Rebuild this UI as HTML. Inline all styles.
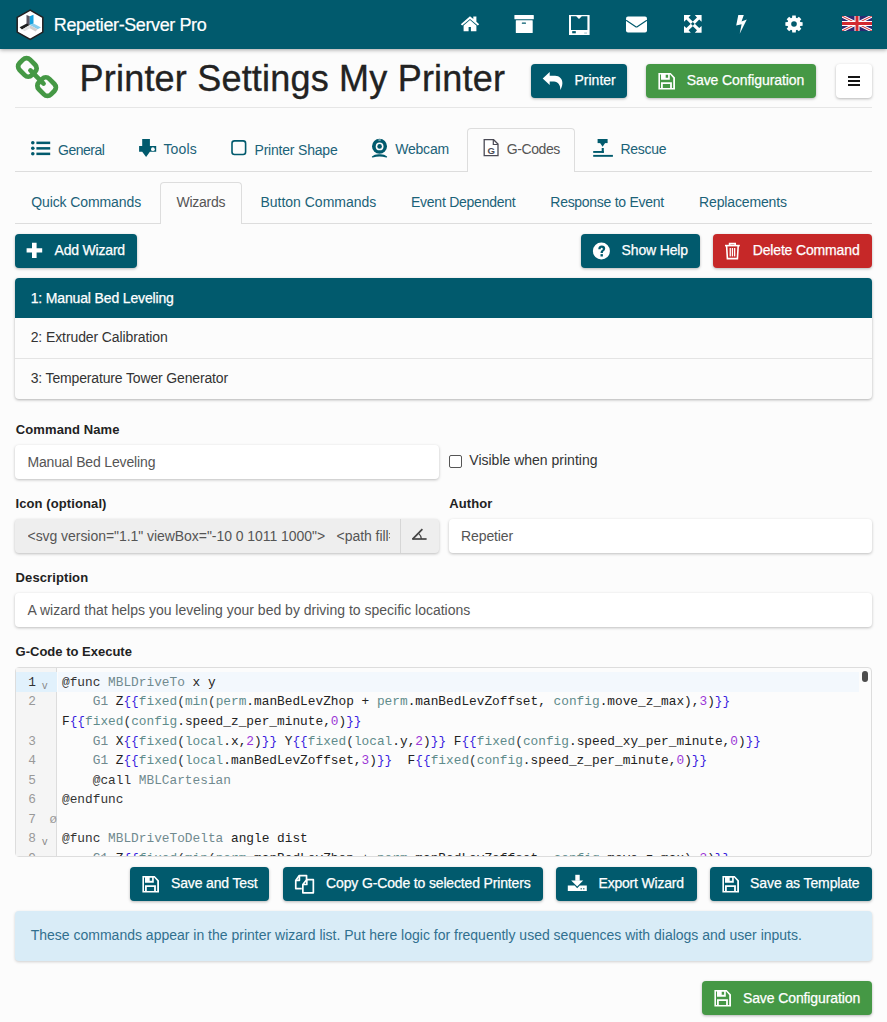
<!DOCTYPE html>
<html><head><meta charset="utf-8">
<style>
*{box-sizing:border-box;margin:0;padding:0}
html,body{width:887px;height:1022px;overflow:hidden;background:#fcfcfc;font-family:"Liberation Sans",sans-serif;font-size:14px;color:#333;position:relative}
.a{position:absolute;white-space:nowrap;line-height:1}
.cm{font-family:"Liberation Mono",monospace;font-size:12.8px;line-height:1}
</style></head><body>
<div style="position:absolute;left:0px;top:0px;width:887px;height:49px;background:#015a6d;box-shadow:0 1px 4px rgba(0,0,0,.35)"></div>
<svg style="position:absolute;left:16px;top:9px;overflow:visible" width="28" height="32" viewBox="0 0 28 32"><polygon points="14.2,1.1 26.8,8.4 26.8,23.1 14.2,30.3 1.2,23.1 1.2,8.4" fill="#fff" stroke="#231f20" stroke-width="1.5"/><polygon points="10.5,6 13.8,7.3 13.8,16.1 10.5,14.8" fill="#5b5662"/><polygon points="13.8,7.3 17.5,5.8 17.5,14.6 13.8,16.1" fill="#16a2de"/><polygon points="3.6,18.3 10.8,14.5 13.8,16.1 6,20.4" fill="#1e1e1e"/><polygon points="13.8,16.1 17.5,14.6 25,18.4 21.5,20.2" fill="#85cdee"/><polygon points="6,20.4 13.8,16.1 13.9,19.2 8.6,22.2" fill="#e2e2e2"/><polygon points="13.9,16.2 21.5,20.2 19.6,22.6 13.9,19.2" fill="#cfcfcf"/></svg>
<div class="a" style="left:53.80px;top:15.56px;font-size:18px;color:#fff;letter-spacing:-0.4px;-webkit-text-stroke:0.2px #fff;">Repetier-Server Pro</div>
<svg style="position:absolute;left:460px;top:15px;overflow:visible" width="20" height="17" viewBox="0 0 20 17"><path d="M10,1.2 L0.8,9.2 L2.2,10.6 L10,4 L17.8,10.6 L19.2,9.2 L16.4,6.8 L16.4,1.4 L13.3,1.4 L13.3,4.1 Z" fill="#fff"/><path d="M3.6,10.4 L10,5 L16.4,10.4 L16.4,16.2 L10.9,16.2 L10.9,12 L8.6,12 L8.6,16.2 L3.6,16.2 Z" fill="#fff"/></svg>
<svg style="position:absolute;left:514px;top:15px;overflow:visible" width="20" height="18" viewBox="0 0 20 18"><rect x="0.4" y="0" width="19.4" height="4.3" rx="0.6" fill="#fff"/><rect x="1.8" y="5.2" width="16.9" height="12.8" rx="0.5" fill="#fff"/><rect x="7.8" y="7.6" width="4.2" height="1.2" rx="0.5" fill="#015a6d"/></svg>
<svg style="position:absolute;left:569px;top:15px;overflow:visible" width="21" height="20" viewBox="0 0 21 20"><path fill="#fff" fill-rule="evenodd" d="M0,0 H20.6 V20 H0 Z M2,1.2 V15 H18.4 V1.2 H12.8 L10,3.9 L7.2,1.2 Z"/><rect x="3.2" y="16.1" width="3.6" height="2.2" fill="#015a6d"/><rect x="15.2" y="17.6" width="2.8" height="0.9" fill="#8fb6c2"/></svg>
<svg style="position:absolute;left:626px;top:16px;overflow:visible" width="21" height="17" viewBox="0 0 21 17"><rect x="0" y="0.4" width="21" height="16" rx="2" fill="#fff"/><path d="M0.1,4.3 L9.4,10.6 Q10.5,11.4 11.6,10.6 L20.9,4.3" fill="none" stroke="#015a6d" stroke-width="1.2"/></svg>
<svg style="position:absolute;left:684px;top:15px;overflow:visible" width="18" height="18" viewBox="0 0 18 18"><g fill="#fff"><polygon points="0,0 6.8,0 4.6,2.4 9,6.8 6.8,9 2.4,4.6 0,6.8"/><polygon points="17.6,0 10.8,0 13,2.4 8.6,6.8 10.8,9 15.2,4.6 17.6,6.8"/><polygon points="0,17.7 6.8,17.7 4.6,15.3 9,10.9 6.8,8.7 2.4,13.1 0,10.9"/><polygon points="17.6,17.7 10.8,17.7 13,15.3 8.6,10.9 10.8,8.7 15.2,13.1 17.6,10.9"/></g></svg>
<svg style="position:absolute;left:735px;top:15px;overflow:visible" width="12" height="19" viewBox="0 0 12 19"><polygon points="3.3,0.1 8.8,0.1 6.5,6.6 11.8,4.6 4.7,18.7 6.6,9.3 1.2,10.5" fill="#fff"/></svg>
<svg style="position:absolute;left:785px;top:15px;overflow:visible" width="18" height="18" viewBox="0 0 18 18"><polygon points="7.05,2.69 7.25,0.38 10.75,0.38 10.95,2.69 12.08,3.16 13.86,1.67 16.33,4.14 14.84,5.92 15.31,7.05 17.62,7.25 17.62,10.75 15.31,10.95 14.84,12.08 16.33,13.86 13.86,16.33 12.08,14.84 10.95,15.31 10.75,17.62 7.25,17.62 7.05,15.31 5.92,14.84 4.14,16.33 1.67,13.86 3.16,12.08 2.69,10.95 0.38,10.75 0.38,7.25 2.69,7.05 3.16,5.92 1.67,4.14 4.14,1.67 5.92,3.16" fill="#fff"/><circle cx="9" cy="9" r="5.6" fill="#fff"/><circle cx="9" cy="9" r="2.8" fill="#015a6d"/></svg>
<svg style="position:absolute;left:842px;top:16px;overflow:visible" width="30" height="15" viewBox="0 0 30 15"><defs><clipPath id="fc"><rect width="30" height="15"/></clipPath></defs><g clip-path="url(#fc)"><rect width="30" height="15" fill="#2d2a72"/><path d="M0,0 L30,15 M30,0 L0,15" stroke="#fff" stroke-width="3"/><path d="M0,0 L30,15 M30,0 L0,15" stroke="#d3282f" stroke-width="1"/><path d="M15,0 V15 M0,7.5 H30" stroke="#fff" stroke-width="5"/><path d="M15,0 V15 M0,7.5 H30" stroke="#d3282f" stroke-width="3"/></g></svg>
<svg style="position:absolute;left:15px;top:55px;overflow:visible" width="44" height="44" viewBox="0 0 44 44"><g transform="rotate(45 22 22)" fill="none" stroke="#459845"><rect x="-0.2" y="14.6" width="17.2" height="14.8" rx="5" stroke-width="4.8"/><rect x="27" y="14.6" width="17.2" height="14.8" rx="5" stroke-width="4.8"/><line x1="12.7" y1="22" x2="31.3" y2="22" stroke-width="4.6" stroke-linecap="round"/></g></svg>
<div class="a" style="left:79.60px;top:60.53px;font-size:36px;color:#222;letter-spacing:0.2px;-webkit-text-stroke:0.35px #222;">Printer Settings My Printer</div>
<div style="position:absolute;left:15px;top:107px;width:857px;height:1px;background:#e6e6e6"></div>
<div style="position:absolute;left:531px;top:64px;width:96px;height:34px;background:#015a6d;border-radius:4px;box-shadow:0 1px 3px rgba(0,0,0,.28)"></div>
<svg style="position:absolute;left:538px;top:66px" width="30" height="28" viewBox="0 0 30 28"><path fill="#fff" d="M4.7,12.5 L11.7,5.9 L11.7,9.8 L17,9.8 C21.5,9.8 24.6,13 24.4,17.2 C24.3,20 23.2,22.4 22.3,23.9 C22.6,19 20,15.4 16,15.4 L11.7,15.4 L11.7,19 Z"/></svg>
<div class="a" style="left:574.50px;top:73.15px;font-size:14px;color:#fff;-webkit-text-stroke:0.25px #fff;">Printer</div>
<div style="position:absolute;left:646px;top:64px;width:170px;height:34px;background:#459845;border-radius:4px;box-shadow:0 1px 3px rgba(0,0,0,.28)"></div>
<svg style="position:absolute;left:658px;top:73px" width="18" height="17" viewBox="0 0 18 17"><path fill="#fff" fill-rule="evenodd" d="M0.4,0.1 H12.7 L17,4.5 V16.5 H0.4 Z M2,1.5 V15 H15.2 V5.1 L12.1,1.5 Z M3,1.5 H11.8 V6.8 H3 Z M7.7,1.7 H10.1 V4.8 H7.7 Z M3,9.2 H13.9 V15 H3 Z M4.8,11 H12.1 V15 H4.8 Z"/></svg>
<div class="a" style="left:686.80px;top:73.15px;font-size:14px;color:#fff;letter-spacing:-0.1px;-webkit-text-stroke:0.25px #fff;">Save Configuration</div>
<div style="position:absolute;left:836px;top:64px;width:36px;height:34px;background:#fff;border-radius:4px;box-shadow:0 1px 3px rgba(0,0,0,.28)"></div>
<div style="position:absolute;left:848px;top:76px;width:12px;height:2px;background:#151515"></div>
<div style="position:absolute;left:848px;top:80px;width:12px;height:2px;background:#151515"></div>
<div style="position:absolute;left:848px;top:84px;width:12px;height:2px;background:#151515"></div>
<div style="position:absolute;left:467px;top:128px;width:108px;height:44px;border:1px solid #ddd;border-bottom:none;border-radius:4px 4px 0 0;background:#fcfcfc"></div>
<div style="position:absolute;left:15px;top:171px;width:452px;height:1px;background:#ddd"></div>
<div style="position:absolute;left:575px;top:171px;width:297px;height:1px;background:#ddd"></div>
<svg style="position:absolute;left:31px;top:141px;overflow:visible" width="20" height="15" viewBox="0 0 20 15"><g fill="#015a6d"><circle cx="1.8" cy="1.8" r="1.8"/><circle cx="1.8" cy="7.3" r="1.8"/><circle cx="1.8" cy="12.8" r="1.8"/><rect x="5.4" y="0.6" width="13.8" height="2.5"/><rect x="5.4" y="6.1" width="13.8" height="2.5"/><rect x="5.4" y="11.6" width="13.8" height="2.5"/></g></svg>
<div class="a" style="left:58.10px;top:142.75px;font-size:14px;color:#1b6278;letter-spacing:-0.5px;">General</div>
<svg style="position:absolute;left:139px;top:139px;overflow:visible" width="18" height="19" viewBox="0 0 18 19"><path fill="#015a6d" d="M3.2,0 H10.9 V7 H17.2 V12.7 H10.9 L7.1,18.1 L3.2,12.7 H0.1 V7 H3.2 Z"/><circle cx="13.9" cy="10.2" r="1.9" fill="#fcfcfc"/></svg>
<div class="a" style="left:163.40px;top:142.05px;font-size:14px;color:#1b6278;letter-spacing:0.2px;">Tools</div>
<svg style="position:absolute;left:231px;top:140px;overflow:visible" width="16" height="16" viewBox="0 0 16 16"><rect x="1" y="0.9" width="13.6" height="13.6" rx="2.5" fill="none" stroke="#015a6d" stroke-width="1.6"/></svg>
<div class="a" style="left:254.50px;top:143.15px;font-size:14px;color:#1b6278;letter-spacing:-0.2px;">Printer Shape</div>
<svg style="position:absolute;left:371px;top:138px;overflow:visible" width="17" height="20" viewBox="0 0 17 20"><circle cx="8.5" cy="8.3" r="7.5" fill="#015a6d"/><circle cx="8.6" cy="8.4" r="3.9" fill="#fcfcfc"/><circle cx="8.6" cy="8.4" r="2.3" fill="#015a6d"/><rect x="7.4" y="1.5" width="2.4" height="1" fill="#cfdde1"/><path d="M0.9,18.4 Q4,15.8 8.5,16.2 Q13,15.8 16.1,18.4 Q16.4,19.6 15.2,19.4 Q8.5,17.6 1.8,19.4 Q0.6,19.6 0.9,18.4 Z" fill="#015a6d"/></svg>
<div class="a" style="left:395.20px;top:141.85px;font-size:14px;color:#1b6278;letter-spacing:-0.2px;">Webcam</div>
<svg style="position:absolute;left:483px;top:139px;overflow:visible" width="17" height="18" viewBox="0 0 17 18"><path d="M1.2,0.7 H10.6 L15,5.1 V16.6 H1.2 Z" fill="#fff" stroke="#4a4a55" stroke-width="1.3"/><path d="M10.3,0.8 V5.5 H15" fill="none" stroke="#4a4a55" stroke-width="1.2"/><text x="4.6" y="14.6" font-family="Liberation Sans" font-weight="bold" font-size="9.6" fill="#4a4a55">G</text></svg>
<div class="a" style="left:506.70px;top:141.65px;font-size:14px;color:#555;letter-spacing:-0.4px;">G-Codes</div>
<svg style="position:absolute;left:593px;top:139px;overflow:visible" width="20" height="18" viewBox="0 0 20 18"><g fill="#015a6d"><rect x="4.6" y="0" width="10" height="4.1"/><polygon points="7.1,4 12.1,4 9.6,7.8"/><rect x="8.7" y="9" width="2.1" height="4.9"/><rect x="0.2" y="12" width="10.6" height="1.9"/><rect x="0.2" y="15.9" width="19.7" height="1.9"/></g></svg>
<div class="a" style="left:620.50px;top:141.95px;font-size:14px;color:#1b6278;letter-spacing:-0.3px;">Rescue</div>
<div style="position:absolute;left:160px;top:182px;width:82px;height:42px;border:1px solid #ddd;border-bottom:none;border-radius:4px 4px 0 0;background:#fcfcfc"></div>
<div style="position:absolute;left:15px;top:223px;width:145px;height:1px;background:#ddd"></div>
<div style="position:absolute;left:242px;top:223px;width:630px;height:1px;background:#ddd"></div>
<div class="a" style="left:31.20px;top:195.15px;font-size:14px;color:#1b6278;letter-spacing:-0.1px;">Quick Commands</div>
<div class="a" style="left:176.50px;top:195.15px;font-size:14px;color:#555;letter-spacing:-0.25px;">Wizards</div>
<div class="a" style="left:260.40px;top:195.15px;font-size:14px;color:#1b6278;">Button Commands</div>
<div class="a" style="left:411.00px;top:195.15px;font-size:14px;color:#1b6278;letter-spacing:-0.25px;">Event Dependent</div>
<div class="a" style="left:550.30px;top:195.15px;font-size:14px;color:#1b6278;letter-spacing:-0.28px;">Response to Event</div>
<div class="a" style="left:699.10px;top:195.15px;font-size:14px;color:#1b6278;letter-spacing:-0.15px;">Replacements</div>
<div style="position:absolute;left:15px;top:234px;width:122px;height:34px;background:#015a6d;border-radius:4px;box-shadow:0 1px 3px rgba(0,0,0,.28)"></div>
<svg style="position:absolute;left:26px;top:242px" width="17" height="17" viewBox="0 0 17 17"><path fill="#fff" d="M6,0.8 H10.6 V6.2 H16.2 V10.6 H10.6 V16 H6 V10.6 H0.6 V6.2 H6 Z"/></svg>
<div class="a" style="left:54.60px;top:243.15px;font-size:14px;color:#fff;letter-spacing:-0.2px;-webkit-text-stroke:0.25px #fff;">Add Wizard</div>
<div style="position:absolute;left:581px;top:234px;width:119px;height:34px;background:#015a6d;border-radius:4px;box-shadow:0 1px 3px rgba(0,0,0,.28)"></div>
<svg style="position:absolute;left:592px;top:242px" width="19" height="19" viewBox="0 0 19 19"><circle cx="9.4" cy="9" r="8.5" fill="#fff"/><path d="M6.3,7.2 Q6.3,3.5 9.8,3.5 Q13.2,3.5 13.2,6.6 Q13.2,8.6 11.3,9.6 Q10.9,9.9 10.9,11 H8.5 Q8.5,9 9.9,8.1 Q10.8,7.6 10.8,6.9 Q10.8,5.8 9.7,5.8 Q8.6,5.8 8.6,7.2 Z" fill="#015a6d"/><rect x="8.5" y="12.1" width="2.4" height="2.4" fill="#015a6d"/></svg>
<div class="a" style="left:621.60px;top:243.15px;font-size:14px;color:#fff;letter-spacing:-0.15px;-webkit-text-stroke:0.25px #fff;">Show Help</div>
<div style="position:absolute;left:713px;top:234px;width:159px;height:34px;background:#c62828;border-radius:4px;box-shadow:0 1px 3px rgba(0,0,0,.28)"></div>
<svg style="position:absolute;left:724px;top:242px" width="17" height="18" viewBox="0 0 17 18"><g fill="none" stroke="#fff" stroke-width="1.6"><path d="M1,3.6 H15.8"/><path d="M5.6,3.4 V1.6 H11.2 V3.4"/><path d="M2.6,3.8 L3.4,16.6 H13.4 L14.2,3.8"/></g><g fill="#fff"><rect x="5.6" y="6" width="1.3" height="8.4"/><rect x="7.8" y="6" width="1.3" height="8.4"/><rect x="10" y="6" width="1.3" height="8.4"/></g></svg>
<div class="a" style="left:752.70px;top:243.15px;font-size:14px;color:#fff;letter-spacing:-0.15px;-webkit-text-stroke:0.25px #fff;">Delete Command</div>
<div style="position:absolute;left:15px;top:278px;width:857px;height:121px;background:#fcfcfc;border-radius:4px;box-shadow:0 1px 3px rgba(0,0,0,.3)"></div>
<div style="position:absolute;left:15px;top:278px;width:857px;height:40px;background:#015a6d;border-radius:4px 4px 0 0"></div>
<div style="position:absolute;left:15px;top:358px;width:857px;height:1px;background:#e4e4e4"></div>
<div class="a" style="left:30.70px;top:290.65px;font-size:14px;color:#fff;letter-spacing:-0.15px;-webkit-text-stroke:0.25px #fff;">1: Manual Bed Leveling</div>
<div class="a" style="left:30.70px;top:330.15px;font-size:14px;color:#333;letter-spacing:-0.1px;">2: Extruder Calibration</div>
<div class="a" style="left:30.70px;top:371.15px;font-size:14px;color:#333;letter-spacing:-0.15px;">3: Temperature Tower Generator</div>
<div class="a" style="left:15.80px;top:422.80px;font-size:13px;color:#222;font-weight:700;letter-spacing:0.1px;">Command Name</div>
<div style="position:absolute;left:15px;top:445px;width:424px;height:34px;background:#fff;border-radius:4px;box-shadow:0 1px 3px rgba(0,0,0,.25)"></div>
<div class="a" style="left:27.40px;top:455.15px;font-size:14px;color:#555;letter-spacing:-0.15px;">Manual Bed Leveling</div>
<div style="position:absolute;left:449px;top:455px;width:13px;height:13px;border:1.3px solid #555;border-radius:2px;background:#fff"></div>
<div class="a" style="left:469.30px;top:453.15px;font-size:14px;color:#333;">Visible when printing</div>
<div class="a" style="left:15.50px;top:497.30px;font-size:13px;color:#222;font-weight:700;letter-spacing:0.1px;">Icon (optional)</div>
<div style="position:absolute;left:15px;top:519px;width:424px;height:34px;background:#eee;border-radius:4px;box-shadow:0 1px 3px rgba(0,0,0,.25)"></div>
<div class="a" style="left:27.5px;top:529.45px;width:362px;height:18px;overflow:hidden;font-size:14px;color:#555;letter-spacing:-0.05px">&lt;svg version="1.1" viewBox="-10 0 1011 1000"&gt;&nbsp;&nbsp; &lt;path fill="currentColor" d="M0"/&gt;</div>
<div style="position:absolute;left:400px;top:519px;width:1px;height:34px;background:#d6d6d6"></div>
<svg style="position:absolute;left:411px;top:527px;overflow:visible" width="17" height="14" viewBox="0 0 17 14"><path d="M1.6,12.2 L11.4,2.2" stroke="#444" stroke-width="1.7" fill="none"/><path d="M1.2,12 H15.6" stroke="#444" stroke-width="1.7" fill="none"/><path d="M7.8,6.6 Q10.2,8.6 10.4,12" stroke="#444" stroke-width="1.2" fill="none"/></svg>
<div class="a" style="left:449.20px;top:496.60px;font-size:13px;color:#222;font-weight:700;letter-spacing:0.1px;">Author</div>
<div style="position:absolute;left:449px;top:519px;width:423px;height:34px;background:#fff;border-radius:4px;box-shadow:0 1px 3px rgba(0,0,0,.25)"></div>
<div class="a" style="left:461.00px;top:528.85px;font-size:14px;color:#555;letter-spacing:-0.1px;">Repetier</div>
<div class="a" style="left:15.60px;top:571.10px;font-size:13px;color:#222;font-weight:700;letter-spacing:0.1px;">Description</div>
<div style="position:absolute;left:15px;top:593px;width:857px;height:34px;background:#fff;border-radius:4px;box-shadow:0 1px 3px rgba(0,0,0,.25)"></div>
<div class="a" style="left:27.50px;top:602.75px;font-size:14px;color:#555;">A wizard that helps you leveling your bed by driving to specific locations</div>
<div class="a" style="left:15.60px;top:644.70px;font-size:13px;color:#222;font-weight:700;">G-Code to Execute</div>
<div style="position:absolute;left:15px;top:667px;width:857px;height:190px;background:#fcfcfc;border:1px solid #ddd;border-radius:4px;overflow:hidden"></div>
<div style="position:absolute;left:16px;top:668px;width:41px;height:188px;background:#f5f5f5;border-right:1px solid #ddd"></div>
<div style="position:absolute;left:16px;top:672px;width:41px;height:20px;background:#e1f1fc"></div>
<div style="position:absolute;left:58px;top:672px;width:801px;height:20px;background:#f3f8fd"></div>
<div style="position:absolute;left:862px;top:671px;width:6px;height:11px;background:#4d4d4d;border-radius:3px"></div>
<div style="position:absolute;left:16px;top:668px;width:855px;height:188px;overflow:hidden">
<div class="a cm" style="left:0px;top:8.86px;color:#333;width:20px;text-align:right;font-size:12.8px">1</div>
<div class="a cm" style="left:46px;top:8.86px;white-space:pre"><span style="color:#333">@func </span><span style="color:#708a8f">MBLDriveTo</span><span style="color:#222"> x y</span></div>
<div class="a cm" style="left:0px;top:28.41px;color:#999;width:20px;text-align:right;font-size:12.8px">2</div>
<div class="a cm" style="left:46px;top:28.41px;white-space:pre">    <span style="color:#708a8f">G1</span><span style="color:#222"> Z</span><span style="color:#3a1ee0">{{</span><span style="color:#5f8b8b">fixed</span><span style="color:#333">(</span><span style="color:#5f8b8b">min</span><span style="color:#333">(</span><span style="color:#5f8b8b">perm</span><span style="color:#222">.manBedLevZhop + </span><span style="color:#5f8b8b">perm</span><span style="color:#222">.manBedLevZoffset, </span><span style="color:#5f8b8b">config</span><span style="color:#222">.move_z_max),</span><span style="color:#9b37d6">3</span><span style="color:#222">)</span><span style="color:#3a1ee0">}}</span></div>
<div class="a cm" style="left:46px;top:47.96px;white-space:pre"><span style="color:#222">F</span><span style="color:#3a1ee0">{{</span><span style="color:#5f8b8b">fixed</span><span style="color:#333">(</span><span style="color:#5f8b8b">config</span><span style="color:#222">.speed_z_per_minute,</span><span style="color:#9b37d6">0</span><span style="color:#222">)</span><span style="color:#3a1ee0">}}</span></div>
<div class="a cm" style="left:0px;top:67.51px;color:#999;width:20px;text-align:right;font-size:12.8px">3</div>
<div class="a cm" style="left:46px;top:67.51px;white-space:pre">    <span style="color:#708a8f">G1</span><span style="color:#222"> X</span><span style="color:#3a1ee0">{{</span><span style="color:#5f8b8b">fixed</span><span style="color:#333">(</span><span style="color:#5f8b8b">local</span><span style="color:#222">.x,</span><span style="color:#9b37d6">2</span><span style="color:#222">)</span><span style="color:#3a1ee0">}}</span><span style="color:#222"> Y</span><span style="color:#3a1ee0">{{</span><span style="color:#5f8b8b">fixed</span><span style="color:#333">(</span><span style="color:#5f8b8b">local</span><span style="color:#222">.y,</span><span style="color:#9b37d6">2</span><span style="color:#222">)</span><span style="color:#3a1ee0">}}</span><span style="color:#222"> F</span><span style="color:#3a1ee0">{{</span><span style="color:#5f8b8b">fixed</span><span style="color:#333">(</span><span style="color:#5f8b8b">config</span><span style="color:#222">.speed_xy_per_minute,</span><span style="color:#9b37d6">0</span><span style="color:#222">)</span><span style="color:#3a1ee0">}}</span></div>
<div class="a cm" style="left:0px;top:87.06px;color:#999;width:20px;text-align:right;font-size:12.8px">4</div>
<div class="a cm" style="left:46px;top:87.06px;white-space:pre">    <span style="color:#708a8f">G1</span><span style="color:#222"> Z</span><span style="color:#3a1ee0">{{</span><span style="color:#5f8b8b">fixed</span><span style="color:#333">(</span><span style="color:#5f8b8b">local</span><span style="color:#222">.manBedLevZoffset,</span><span style="color:#9b37d6">3</span><span style="color:#222">)</span><span style="color:#3a1ee0">}}</span><span style="color:#222">  F</span><span style="color:#3a1ee0">{{</span><span style="color:#5f8b8b">fixed</span><span style="color:#333">(</span><span style="color:#5f8b8b">config</span><span style="color:#222">.speed_z_per_minute,</span><span style="color:#9b37d6">0</span><span style="color:#222">)</span><span style="color:#3a1ee0">}}</span></div>
<div class="a cm" style="left:0px;top:106.61px;color:#999;width:20px;text-align:right;font-size:12.8px">5</div>
<div class="a cm" style="left:46px;top:106.61px;white-space:pre">    <span style="color:#333">@call </span><span style="color:#708a8f">MBLCartesian</span></div>
<div class="a cm" style="left:0px;top:126.16px;color:#999;width:20px;text-align:right;font-size:12.8px">6</div>
<div class="a cm" style="left:46px;top:126.16px;white-space:pre"><span style="color:#333">@endfunc</span></div>
<div class="a cm" style="left:0px;top:145.71px;color:#999;width:20px;text-align:right;font-size:12.8px">7</div>
<div class="a cm" style="left:46px;top:145.71px;white-space:pre"></div>
<div class="a cm" style="left:0px;top:165.26px;color:#999;width:20px;text-align:right;font-size:12.8px">8</div>
<div class="a cm" style="left:46px;top:165.26px;white-space:pre"><span style="color:#333">@func </span><span style="color:#708a8f">MBLDriveToDelta</span><span style="color:#222"> angle dist</span></div>
<div class="a cm" style="left:0px;top:184.81px;color:#999;width:20px;text-align:right;font-size:12.8px">9</div>
<div class="a cm" style="left:46px;top:184.81px;white-space:pre">    <span style="color:#708a8f">G1</span><span style="color:#222"> Z</span><span style="color:#3a1ee0">{{</span><span style="color:#5f8b8b">fixed</span><span style="color:#333">(</span><span style="color:#5f8b8b">min</span><span style="color:#333">(</span><span style="color:#5f8b8b">perm</span><span style="color:#222">.manBedLevZhop + </span><span style="color:#5f8b8b">perm</span><span style="color:#222">.manBedLevZoffset, </span><span style="color:#5f8b8b">config</span><span style="color:#222">.move_z_max),</span><span style="color:#9b37d6">3</span><span style="color:#222">)</span><span style="color:#3a1ee0">}}</span></div>
<div class="a cm" style="left:25.8px;top:13.54px;color:#888;font-size:10px">v</div>
<div class="a cm" style="left:25.8px;top:169.94px;color:#888;font-size:10px">v</div>
<div class="a cm" style="left:33.6px;top:146.17px;color:#999;font-size:12.5px">&#248;</div>
</div>
<div style="position:absolute;left:130px;top:867px;width:139px;height:34px;background:#015a6d;border-radius:4px;box-shadow:0 1px 3px rgba(0,0,0,.28)"></div>
<svg style="position:absolute;left:142px;top:876px" width="18" height="17" viewBox="0 0 18 17"><path fill="#fff" fill-rule="evenodd" d="M0.4,0.1 H12.7 L17,4.5 V16.5 H0.4 Z M2,1.5 V15 H15.2 V5.1 L12.1,1.5 Z M3,1.5 H11.8 V6.8 H3 Z M7.7,1.7 H10.1 V4.8 H7.7 Z M3,9.2 H13.9 V15 H3 Z M4.8,11 H12.1 V15 H4.8 Z"/></svg>
<div class="a" style="left:171.00px;top:876.15px;font-size:14px;color:#fff;letter-spacing:-0.15px;-webkit-text-stroke:0.25px #fff;">Save and Test</div>
<div style="position:absolute;left:283px;top:867px;width:260px;height:34px;background:#015a6d;border-radius:4px;box-shadow:0 1px 3px rgba(0,0,0,.28)"></div>
<svg style="position:absolute;left:294px;top:874px" width="21" height="20" viewBox="0 0 21 20"><g fill="none" stroke="#fff" stroke-width="1.7" stroke-linejoin="round"><path d="M7.8,14.55 H1.75 V6.4 L5.3,1.55 H12.55 V5.4"/><path d="M1.9,6.3 H5.4 V1.7"/><path d="M8.85,10.6 L12.6,5.65 H19.35 V18.85 H8.85 Z"/><path d="M9,10.5 H12.8 V5.8"/></g></svg>
<div class="a" style="left:326.10px;top:876.15px;font-size:14px;color:#fff;letter-spacing:-0.15px;-webkit-text-stroke:0.25px #fff;">Copy G-Code to selected Printers</div>
<div style="position:absolute;left:556px;top:867px;width:141px;height:34px;background:#015a6d;border-radius:4px;box-shadow:0 1px 3px rgba(0,0,0,.28)"></div>
<svg style="position:absolute;left:567px;top:874px" width="21" height="18" viewBox="0 0 21 18"><g fill="#fff"><rect x="8.3" y="0.8" width="4.4" height="6"/><polygon points="4.2,6.4 16.2,6.4 10.2,12.6"/><path d="M0.8,11.6 H7.6 L10.2,14.2 L12.8,11.6 H19.8 V17 H0.8 Z"/></g><g fill="#015a6d"><rect x="13.6" y="14.2" width="1.2" height="1.2"/><rect x="16.2" y="14.2" width="1.2" height="1.2"/></g></svg>
<div class="a" style="left:598.50px;top:876.15px;font-size:14px;color:#fff;letter-spacing:-0.2px;-webkit-text-stroke:0.25px #fff;">Export Wizard</div>
<div style="position:absolute;left:710px;top:867px;width:162px;height:34px;background:#015a6d;border-radius:4px;box-shadow:0 1px 3px rgba(0,0,0,.28)"></div>
<svg style="position:absolute;left:722px;top:876px" width="18" height="17" viewBox="0 0 18 17"><path fill="#fff" fill-rule="evenodd" d="M0.4,0.1 H12.7 L17,4.5 V16.5 H0.4 Z M2,1.5 V15 H15.2 V5.1 L12.1,1.5 Z M3,1.5 H11.8 V6.8 H3 Z M7.7,1.7 H10.1 V4.8 H7.7 Z M3,9.2 H13.9 V15 H3 Z M4.8,11 H12.1 V15 H4.8 Z"/></svg>
<div class="a" style="left:750.10px;top:876.15px;font-size:14px;color:#fff;letter-spacing:-0.1px;-webkit-text-stroke:0.25px #fff;">Save as Template</div>
<div style="position:absolute;left:15px;top:911px;width:857px;height:50px;background:#d9ecf7;border-radius:4px;box-shadow:0 1px 3px rgba(0,0,0,.18)"></div>
<div class="a" style="left:30.70px;top:927.75px;font-size:14px;color:#31708f;">These commands appear in the printer wizard list. Put here logic for frequently used sequences with dialogs and user inputs.</div>
<div style="position:absolute;left:702px;top:981px;width:170px;height:34px;background:#459845;border-radius:4px;box-shadow:0 1px 3px rgba(0,0,0,.28)"></div>
<svg style="position:absolute;left:714px;top:990px" width="18" height="17" viewBox="0 0 18 17"><path fill="#fff" fill-rule="evenodd" d="M0.4,0.1 H12.7 L17,4.5 V16.5 H0.4 Z M2,1.5 V15 H15.2 V5.1 L12.1,1.5 Z M3,1.5 H11.8 V6.8 H3 Z M7.7,1.7 H10.1 V4.8 H7.7 Z M3,9.2 H13.9 V15 H3 Z M4.8,11 H12.1 V15 H4.8 Z"/></svg>
<div class="a" style="left:742.90px;top:990.65px;font-size:14px;color:#fff;letter-spacing:-0.1px;-webkit-text-stroke:0.25px #fff;">Save Configuration</div>
</body></html>
